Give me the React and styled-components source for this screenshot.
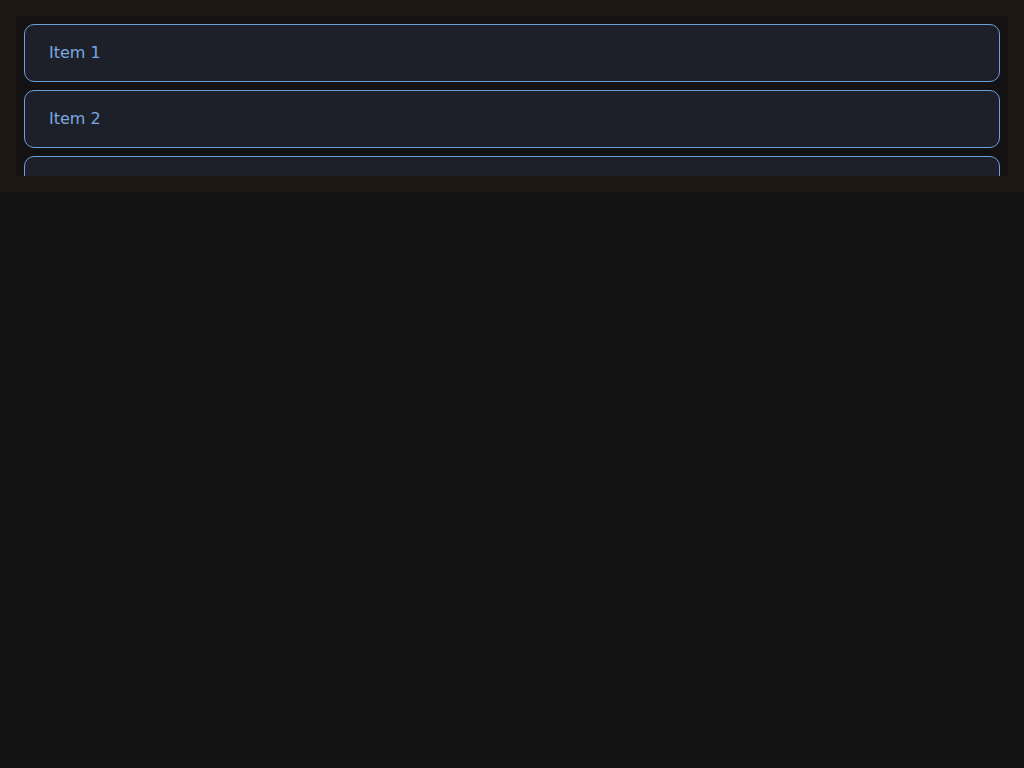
import React from "react";
import styled, { createGlobalStyle } from "styled-components";

const GlobalStyle = createGlobalStyle`
  html, body {
    margin: 0;
    background: #121212;
    font-family: "DejaVu Sans", sans-serif;
  }
`;

const Frame = styled.div`
  background: #1c1712;
  padding: 16px;
`;

const ScrollArea = styled.div`
  background: #131111;
  height: 160px;
  overflow: hidden;
  padding: 8px;
  box-sizing: border-box;
  display: flex;
  flex-direction: column;
  gap: 8px;
`;

const Item = styled.div`
  flex-shrink: 0;
  background: #1e2029;
  border: 1px solid #6a9fd8;
  border-radius: 10px;
  padding: 16px 24px;
  font-size: 16px;
  line-height: 24px;
  color: #7aa7e0;
`;

const items = ["Item 1", "Item 2", "Item 3", "Item 4", "Item 5"];

export default function App() {
  return (
    <>
      <GlobalStyle />
      <Frame>
        <ScrollArea>
          {items.map((label) => (
            <Item key={label}>{label}</Item>
          ))}
        </ScrollArea>
      </Frame>
    </>
  );
}
